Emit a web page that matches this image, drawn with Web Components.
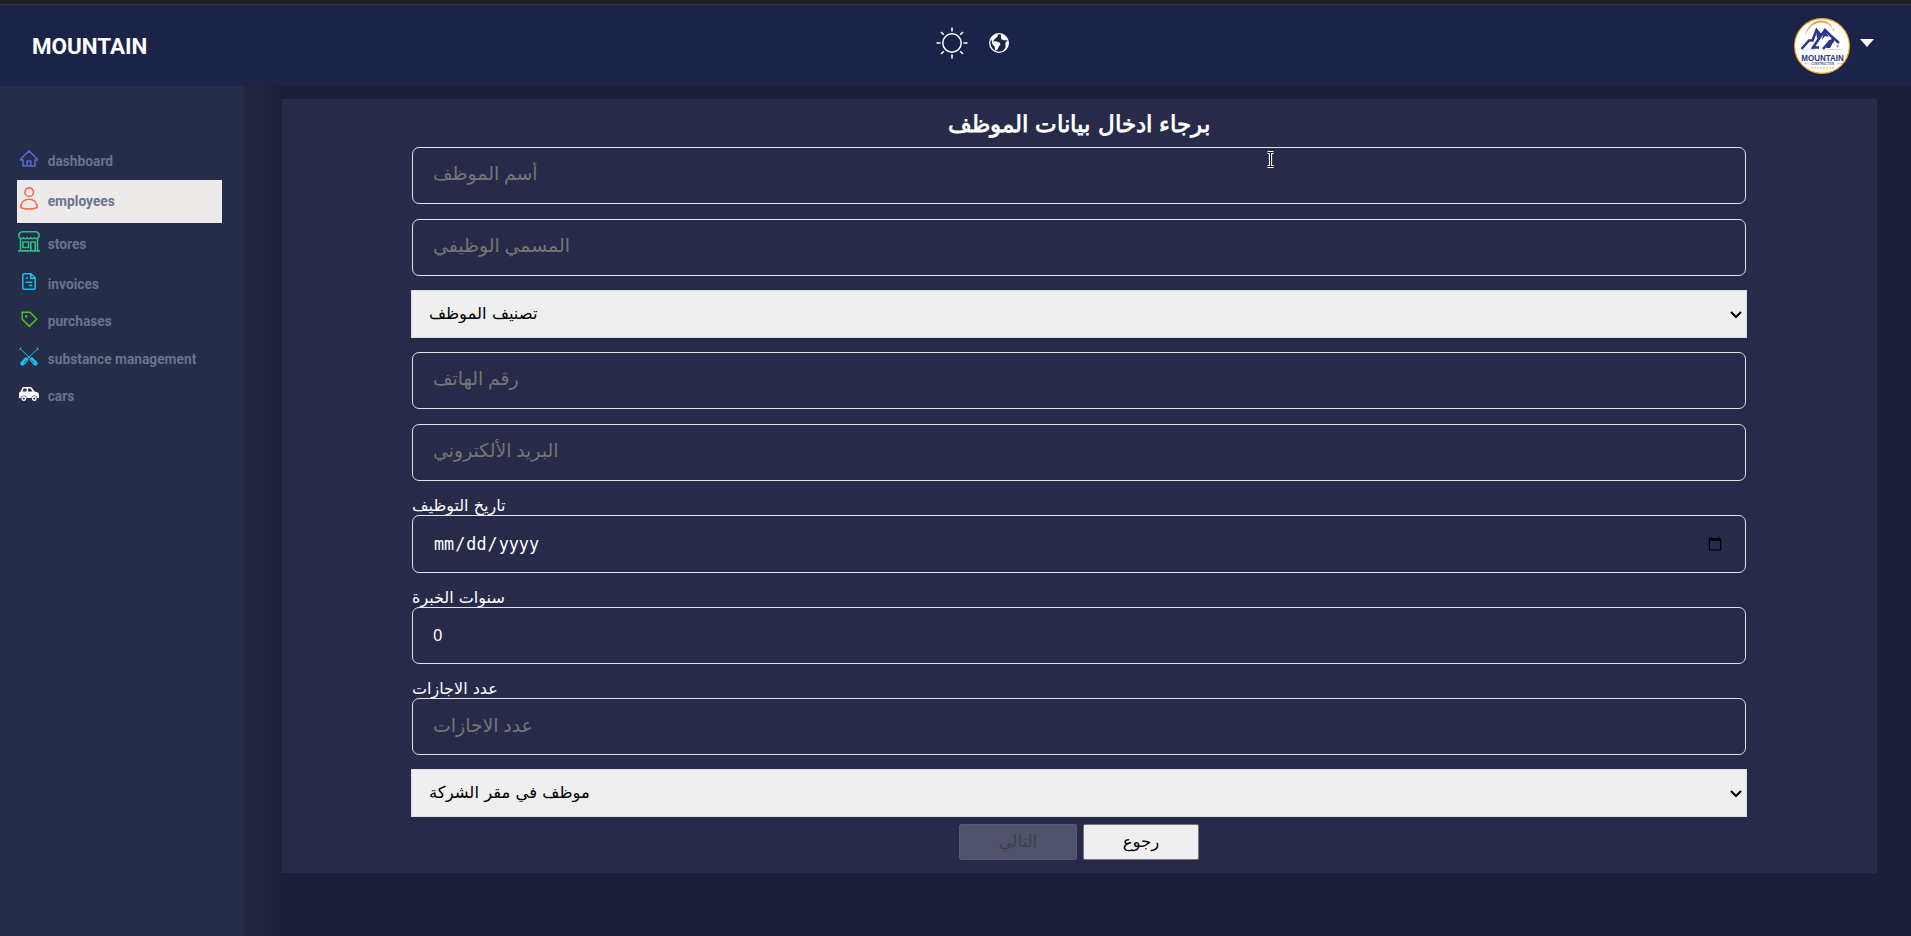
<!DOCTYPE html>
<html lang="en">
<head>
<meta charset="utf-8">
<title>Mountain</title>
<style>
html,body{margin:0;height:100%;overflow:hidden;background:#1c1f3a}
body{font-family:Roboto,"DejaVu Sans",sans-serif;color:#fff}
</style>
</head>
<body>
<mountain-app></mountain-app>
<script>
const define = (name, html, setup) => {
  const tpl = document.createElement('template');
  tpl.innerHTML = html;
  customElements.define(name, class extends HTMLElement {
    constructor() {
      super();
      this.attachShadow({mode: 'open'}).append(tpl.content.cloneNode(true));
    }
    connectedCallback() { if (setup) setup(this, this.shadowRoot); }
  });
};

const icons = {
  home: '<svg width="18" height="17" viewBox="0 0 18 17" fill="none" stroke="#5b68dc" stroke-width="1.5"><path d="M.6 9.3 9 1l8.4 8.3v.7H15v6H3v-6H.6zM7.2 16v-5h3.6v5"/></svg>',
  user: '<svg width="18" height="23" viewBox="0 0 18 23" fill="none" stroke="#fa6b4c" stroke-width="1.6"><circle cx="9.2" cy="5.2" r="4.3"/><path d="M.8 20.4C.8 15 4.6 12.2 9 12.2s8.2 2.8 8.2 8.2c-2.5 2.1-13.900 2.100-16.400 0z"/></svg>',
  store: '<svg width="22" height="21" viewBox="0 0 22 21" fill="none" stroke="#2ebd85" stroke-width="1.6"><path d="M4 .8h14c4 1.300 4 5.500 1.200 6.700-1.400.3-2 .1-2.700-.7-1 1.200-2.700 1.200-3.700 0-1 1.200-2.600 1.200-3.600 0-1 1.200-2.700 1.200-3.700 0-.7.8-1.600 1-2.700.7C0 6.300 0 2.100 4 .8zM2.500 8v11.500M19.500 8v11.500M0 19.900h22M5 11h5.500v5.500H5zM12.800 19.500V11h4.400v8.500"/></svg>',
  invoice: '<svg width="14" height="17" viewBox="0 0 14 17" fill="none" stroke="#12c4ee" stroke-width="1.500"><path d="M2.200.8H9l4.200 4.300v10q0 1.100-1.200 1.100H2.100Q.8 16.200.8 15V2Q.8.8 2.200.8zM8.700.8v4.500h4.500M3.800 5h2.300M3.800 9.300h6.500M7 12.600h3.300"/></svg>',
  tag: '<svg width="17" height="17" viewBox="0 0 17 17" fill="none" stroke="#4dbd26" stroke-width="1.500"><path d="M1.200 1.200H9l6.700 6.900-7.300 7.300-7.200-7.200z"/><path d="M4.100 5.300h2.200" stroke-width="2.200"/></svg>',
  tools: '<svg width="20" height="19" viewBox="0 0 20 19" fill="none" stroke="#12c4ee" stroke-linecap="round"><path d="m1.500 2 10 9.500M18.500 2l-10 9.500M.6 2.700 2 .6M19.400 2.700 18 .6" stroke-width="1"/><path d="m12.800 12.600 3.700 3.800M7.200 12.600l-3.700 3.800" stroke-width="4.300"/><path d="m12 12.800 2.600 2.700M8 12.800l-2.600 2.700" stroke="#262d48" stroke-width=".7"/></svg>',
  car: '<svg width="20" height="14" viewBox="0 0 20 14"><path fill="#fff" fill-rule="evenodd" d="M4.500 0H11q1.200 0 2 1l2.700 3.400 2.500.8Q20 6 20 8v3h-1.700a3 3 0 0 0-5.900 0H7.700a3 3 0 0 0-5.900 0H0V6.500q0-1.500 1.700-2.100L3.200.8Q3.600 0 4.500 0zM4.600 1.600 3.500 4.500h4V1.600zM9 1.600v2.900h4.700l-2.300-2.900z"/><path fill="#fff" fill-rule="evenodd" d="M4.800 9.100a2.400 2.400 0 1 0 .01 0zM4.800 10.400a1.100 1.100 0 1 1-.01 0zM15.300 9.100a2.400 2.400 0 1 0 .01 0zM15.300 10.400a1.100 1.100 0 1 1-.01 0z"/></svg>'
};

define('app-logo', `<style>:host{display:block;width:56px;height:56px}svg{display:block}</style>
<svg width="56" height="56" viewBox="0 0 56 56">
<circle cx="28" cy="28" r="27.400" fill="#fff" stroke="#f6a51c" stroke-width="1.200"/>
<path d="M11.500 19C11.500 10 18 3.200 26.500 2.500 32.500 2.200 37 5.500 38.500 10 34 5 28.500 3.500 23.500 5 17 7 12.500 12.500 11.500 19z" fill="#ee9a5c"/>
<circle cx="39.500" cy="11.500" r=".9" fill="#ee9a5c"/>
<path fill="none" stroke="#2f3488" stroke-width="2.500" stroke-linejoin="miter" d="m7.500 31 7.500-8.500h3.500L22.500 12l4.500 5.500-9 13.500M25 29.500h-6l8.500-12.500L31 12l5 5 9 8M29 31l6.500-7.500 3 0 0-5"/>
<path fill="#2f3488" d="m35 22 6-1-5 9h-4zM22 12l4 5-3 4zM30 12l5 7-4-1-3 4z"/>
<circle cx="43.500" cy="28" r="1.200" fill="#8a8dc4"/>
<path d="M8 32.200q7-1.500 13-.8M31 32q10-1 18-.5" stroke="#c5c8e4" fill="none" stroke-width=".7"/>
<text x="28.500" y="42.700" text-anchor="middle" font-family="Liberation Sans" font-weight="700" font-size="9.300" textLength="42.500" lengthAdjust="spacingAndGlyphs" fill="#2f3488">MOUNTAIN</text>
<text x="28.500" y="47" text-anchor="middle" font-family="Liberation Sans" font-size="3.600" font-weight="700" textLength="23" lengthAdjust="spacingAndGlyphs" fill="#50548f">CONSTRUCTION</text>
<path d="M10 45.800h5M43 45.800h5" stroke="#9a9dc6" stroke-width=".6"/>
<path d="M17 49.700h23" stroke="#f4bd96" stroke-width="1.500" stroke-dasharray="1.800 1.200"/>
</svg>`);

define('app-navbar', `<style>
:host{display:grid;grid-template-columns:1fr auto 1fr;box-sizing:border-box;height:86px;background:linear-gradient(#202020 0 4px,#393939 4px 5px,#1b2349 5px);padding:5px 0 0;align-items:center}
.brand{font:700 22.400px/30px Roboto,sans-serif;padding-left:32px}
.mid{display:flex;gap:21px;align-items:center;padding:0 0 5px 33px}
.end{display:flex;justify-content:flex-end;align-items:center;gap:10px;padding-right:37.500px}
svg{display:block}.caret{margin-bottom:5px}
</style>
<div class="brand">MOUNTAIN</div>
<div class="mid">
<svg width="32" height="32" viewBox="0 0 32 32" fill="none" stroke="#fff" stroke-width="1.500"><circle cx="16" cy="16" r="9.200"/><path d="M16 .5v4M16 27.500v4M.5 16h4M27.500 16h4M5 5l2.800 2.800M24.200 24.200 27 27M27 5l-2.800 2.800M7.800 24.200 5 27"/></svg>
<svg width="20" height="20" viewBox="0 0 20 20"><circle cx="10" cy="10" r="9.300" fill="none" stroke="#fff" stroke-width="1.300"/><path fill="#fff" d="M5 2.400 8.500 1l.5 2-2 2-1.500 1.200L4 8.500l3-.3 3.500 1.400 1 1.900-1.700 2-1 2.500-2.300 2-1-4.500-2.300-2.500L2.800 8 2 6zM12.300 1l4 2 2.200 4-2.700.5-1.800-.8-1.600-.2-.5-2.700zM16.500 9l2.700-1 .2 4-2.900 4.500-3 1.500 3-3z"/></svg>
</div>
<div class="end"><app-logo></app-logo><svg class="caret" width="14" height="8"><path d="M0 0h14L7 8z" fill="#fff"/></svg></div>`);

define('side-item', `<style>
:host{display:flex;align-items:center;box-sizing:border-box;margin:0 22px 0 17px;color:#68738f;font:700 13.750px/20px Roboto,sans-serif}
:host([active]){background:#edebe9}
.i{width:24px;display:flex;justify-content:center;margin-right:6.700px;padding-bottom:5px}
:host([active]) .i{padding-bottom:7px}
.t{padding-bottom:1px}
:host([active]) .t,:host([icon=tag]) .t,:host([icon=car]) .t{padding-bottom:2px}
svg{display:block}
</style><span class="i"></span><span class="t"><slot></slot></span>`, (el, root) => {
  root.querySelector('.i').innerHTML = icons[el.getAttribute('icon')];
  el.style.height = el.getAttribute('size') + 'px';
});

define('app-sidebar', `<style>
:host{display:block;box-sizing:border-box;width:244px;padding-top:56px;background:#262d48}
</style>
<side-item icon="home" size="38">dashboard</side-item>
<side-item icon="user" size="43" active>employees</side-item>
<side-item icon="store" size="42">stores</side-item>
<side-item icon="invoice" size="38">invoices</side-item>
<side-item icon="tag" size="37">purchases</side-item>
<side-item icon="tools" size="38">substance management</side-item>
<side-item icon="car" size="37">cars</side-item>`);

define('form-field', `<style>
:host{display:block;margin:0 1px 15px}
label{display:block;height:19px;font:16px/19px "DejaVu Sans",sans-serif;color:#fff}
label:empty{display:none}
input{display:block;box-sizing:border-box;width:100%;height:57px;border:1px solid #dce3e3;border-radius:7px;background:transparent;color:#fff;padding:0 20px 2px;margin:0;font:16.500px "Noto Sans","DejaVu Sans",sans-serif;text-align:left;outline:0}
input[placeholder]{padding-bottom:4px}
label:not(:empty)+input[placeholder]{padding-bottom:2px}
input::placeholder{font:18.900px Roboto,"DejaVu Sans",sans-serif;color:#757575;opacity:1}
input[type=date]{height:58px;padding-bottom:1px;font:16.800px "DejaVu Sans Mono",monospace}
input::-webkit-calendar-picker-indicator{font-size:16px}
</style><label></label><input>`, (el, root) => {
  root.querySelector('label').textContent = el.getAttribute('label') || '';
  const input = root.querySelector('input');
  for (const a of ['type', 'placeholder', 'value'])
    if (el.hasAttribute(a)) input.setAttribute(a, el.getAttribute(a));
});

define('form-select', `<style>
:host{display:grid;margin:-1px 0 14px;align-items:center}
select,svg{grid-area:1/1}
svg{justify-self:end;margin:1px 5px 0 0;pointer-events:none}
select{appearance:none;display:block;box-sizing:border-box;width:100%;height:48px;border:1px solid #dcdcdc;border-radius:0;background-color:#efefef;color:#000;padding:0 0 1px 17px;margin:0;font:16.450px "DejaVu Sans",sans-serif}
</style><select><option></option></select><svg width="12" height="8" viewBox="0 0 12 8"><path d="m1 1 5 5 5-5" fill="none" stroke="#000" stroke-width="2.100"/></svg>`, (el, root) => {
  root.querySelector('option').textContent = el.getAttribute('label');
});

define('form-button', `<style>
:host{display:block}
button{display:block;box-sizing:border-box;width:100%;height:36px;margin:0;padding:0 0 2px;border:1px solid #767676;border-radius:2px;background:#efefef;color:#000;font:16.500px "DejaVu Sans",sans-serif}
button:disabled{background:#50526b;border-color:#565870;color:#3d3f58}
</style><button><slot></slot></button>`, (el, root) => {
  root.querySelector('button').disabled = el.hasAttribute('disabled');
});

define('employee-form', `<style>
:host{display:block;box-sizing:border-box;height:774px;background:#272b49;padding:0 130px 0 129px}
h2{margin:0;height:48px;font:700 23.400px/50px Roboto;word-spacing:1.500px;text-align:center;color:#fff}
.actions{display:flex;justify-content:center;gap:6px;margin-top:-7px}
.n{width:118px}.b{width:116px}
</style>
<h2>برجاء ادخال بيانات الموظف</h2>
<form-field placeholder="أسم الموظف"></form-field>
<form-field placeholder="المسمي الوظيفي"></form-field>
<form-select label="تصنيف الموظف"></form-select>
<form-field placeholder="رقم الهاتف"></form-field>
<form-field placeholder="البريد الألكتروني"></form-field>
<form-field type="date" label="تاريخ التوظيف"></form-field>
<form-field value="0" label="سنوات الخبرة"></form-field>
<form-field label="عدد الاجازات" placeholder="عدد الاجازات"></form-field>
<form-select label="موظف في مقر الشركة"></form-select>
<div class="actions"><form-button class="n" disabled>التالي</form-button><form-button class="b">رجوع</form-button></div>`);

define('text-cursor', `<style>:host{display:block;position:absolute;left:1266px;top:150px}svg{display:block}</style>
<svg width="9" height="19" viewBox="0 0 9 19"><path d="M1.500 2.500h6M1.500 16.500h6M4.500 2.500v14" fill="none" stroke="#fff" stroke-width="3.200"/><path d="M1.500 2.500h6M1.500 16.500h6M4.500 2.500v14" fill="none" stroke="#111" stroke-width="1.100"/></svg>`);

define('mountain-app', `<style>
:host{display:grid;grid-template:86px 1fr/244px 1fr;width:1911px;height:936px;background:#1c1f3a}
app-navbar{grid-column:1/3}
main{padding:13px 34px 0 38px;background:linear-gradient(90deg,#22273f 0,#1e213c 25px,#1c1f3a 40px)}
</style>
<app-navbar></app-navbar><app-sidebar></app-sidebar>
<main><employee-form></employee-form></main>
<text-cursor></text-cursor>`);
</script>
</body>
</html>
